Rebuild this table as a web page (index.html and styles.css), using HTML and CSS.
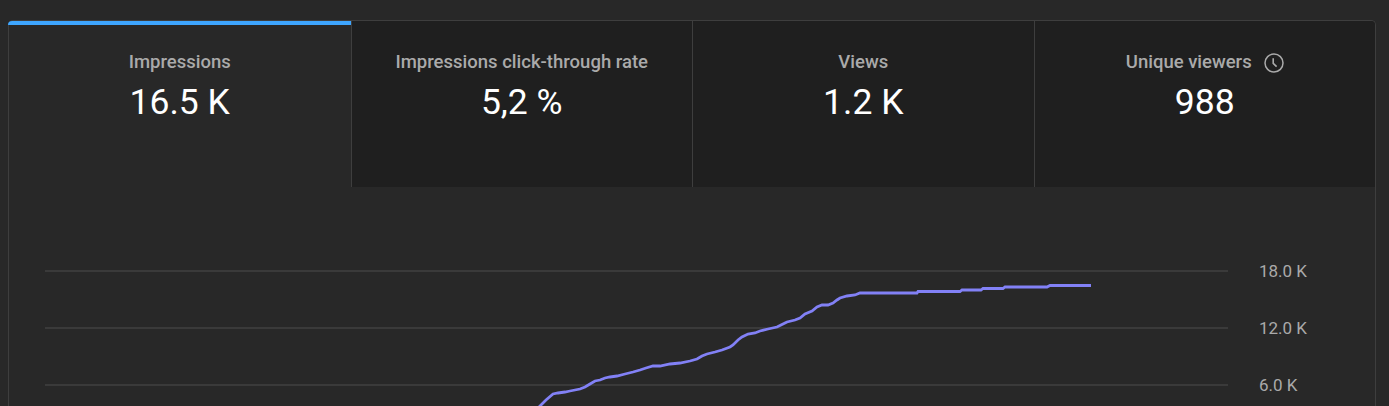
FILE: index.html
```html
<!DOCTYPE html>
<html>
<head>
<meta charset="utf-8">
<link rel="stylesheet" href="styles.css">
</head>
<body>
<div class="card">
  <div class="tabs">
    <div class="tab selected">
      <div class="label">Impressions</div>
      <div class="value">16.5 K</div>
    </div>
    <div class="tab">
      <div class="label">Impressions click-through rate</div>
      <div class="value">5,2 %</div>
    </div>
    <div class="tab">
      <div class="label">Views</div>
      <div class="value">1.2 K</div>
    </div>
    <div class="tab">
      <div class="label">Unique viewers
        <svg class="clock" width="20" height="20" viewBox="0 0 20 20"><circle cx="10" cy="10" r="9" fill="none" stroke="#aaaaaa" stroke-width="1.5"/><path d="M9.2 5.2 V10.3 L12.6 13.6" fill="none" stroke="#aaaaaa" stroke-width="1.6"/></svg>
      </div>
      <div class="value">988</div>
    </div>
  </div>
  <div class="chart">
    <div class="tick"><div class="gridline"></div><div class="tick-label">18.0 K</div></div>
    <div class="tick"><div class="gridline"></div><div class="tick-label">12.0 K</div></div>
    <div class="tick"><div class="gridline"></div><div class="tick-label">6.0 K</div></div>
    <svg class="series" width="1366" height="219" viewBox="9 187 1366 219">
      <polyline fill="none" stroke="#8281f6" stroke-width="2.8" stroke-linejoin="miter" points="538,408 546,400 553,394 558,393 565,392 570,391 575,390 580,389 585,387 590,384 595,381 600,380 605,378 610,377 617,376 625,374 633,372 640,370 646,368 653,366 660,366 670,364 680,363 690,361 697,359 702,356 707,354 715,352 722,350 730,347 733,345 738,340 742,337 748,334 755,333 760,331 768,329 777,327 783,324 787,322 795,320 800,318 805,314 812,311 817,307 822,305 828,305 833,303 837,300 840,298 847,296 855,295 860,293 917,293 918,291.5 960,291.5 962,290 981,290 983,288.5 1003,288.5 1005,287 1047,287 1050,285.5 1091,285.5"/>
    </svg>
  </div>
</div>
</body>
</html>
```
FILE: styles.css
```css
html, body {
  margin: 0;
  padding: 0;
  background: #282828;
  overflow: hidden;
}
body {
  font-family: Roboto, "Liberation Sans", Arial, sans-serif;
}
.card {
  box-sizing: border-box;
  margin: 20px 13px 0 8px;
  height: 386px;
  border: 1px solid #3e3e3e;
  border-bottom: 0;
  border-radius: 5px 5px 0 0;
  background: #282828;
  display: flex;
  flex-direction: column;
}
.tabs {
  display: grid;
  grid-template-columns: repeat(4, 1fr);
  height: 166px;
  flex: none;
}
.tab {
  position: relative;
  background: #1f1f1f;
  border-left: 1px solid #3e3e3e;
  display: flex;
  flex-direction: column;
  align-items: center;
  padding-top: 29px;
}
.tab:first-child {
  border-left: 0;
}
.tab:last-child {
  border-top-right-radius: 4px;
}
.tab.selected {
  background: #282828;
  border-top-left-radius: 4px;
}
.tab.selected::before {
  content: "";
  position: absolute;
  top: 0;
  left: -1px;
  right: 0;
  height: 4px;
  background: #3ea6ff;
  border-top-left-radius: 5px;
}
.label {
  font-size: 18.5px;
  line-height: 25px;
  font-weight: 500;
  color: #aaaaaa;
  display: flex;
  align-items: center;
  gap: 12px;
  white-space: nowrap;
}
.clock {
  display: block;
}
.value {
  margin-top: 5px;
  font-size: 35.5px;
  line-height: 44px;
  color: #ffffff;
  font-weight: 400;
}
.chart {
  position: relative;
  flex: 1;
  overflow: hidden;
  padding: 55px 0 0 36px;
}
.tick {
  display: flex;
  align-items: center;
  height: 57px;
}
.gridline {
  width: 1183px;
  height: 2px;
  background: #3a3a3a;
  flex: none;
}
.tick-label {
  margin-left: 31px;
  font-size: 17px;
  color: #aaaaaa;
  white-space: nowrap;
}
.series {
  position: absolute;
  top: 0;
  left: 0;
}
```
